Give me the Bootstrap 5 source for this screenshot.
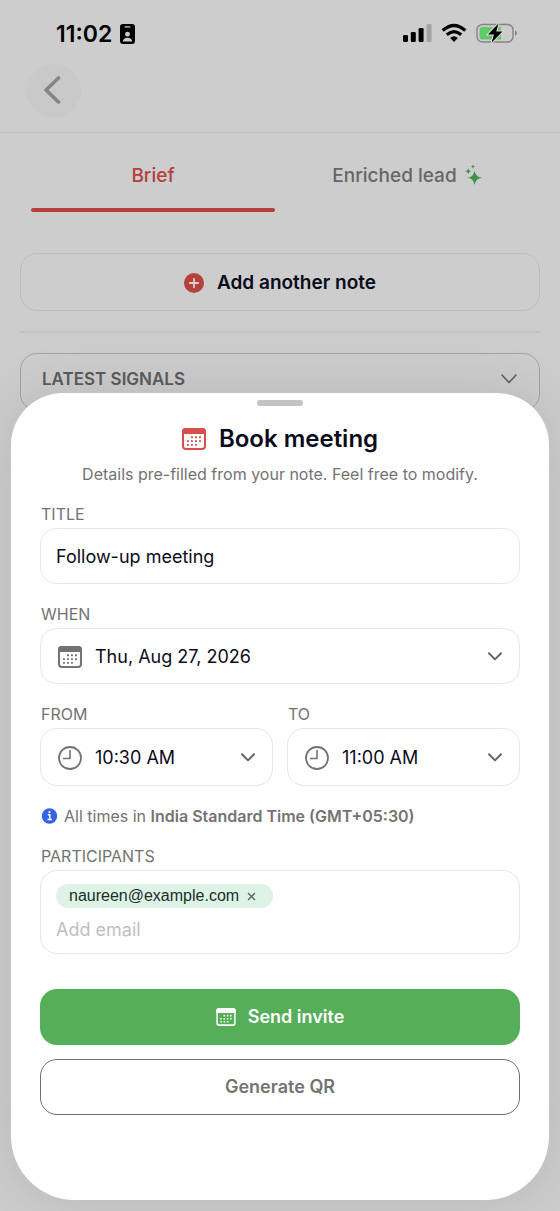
<!DOCTYPE html>
<html lang="en">
<head>
<meta charset="utf-8">
<meta name="viewport" content="width=device-width, initial-scale=1">
<title>Book meeting</title>
<link href="https://cdn.jsdelivr.net/npm/bootstrap@5.3.0/dist/css/bootstrap.min.css" rel="stylesheet">
<style>
  body { background: #cdcdcd; color: #0b0b1c; font-family: Inter, "Liberation Sans", sans-serif; font-size: 18px; line-height: 24px; padding-bottom: 11px; }
  svg { flex: none; display: block; }

  /* Dimmed page */
  .status-bar { padding: 18px 42px 0 56px; height: 64px; color: #000; align-items: flex-start; }
  .clock-text { font-size: 23px; line-height: 32px; font-weight: 600; }
  .status-icons { height: 30px; }
  .app-header { padding: 0 27px 14px; border-bottom: 1px solid #c3c3c3; }
  .back-btn { width: 54px; height: 54px; background: #c9c9c9; border: 0; color: #858585; padding: 0 4px 2px 0; }
  .tab-row { padding: 24px 31px 0; gap: 10px; }
  .tab-link { height: 55px; padding-top: 7px; color: #666; font-weight: 500; font-size: 19px; border-bottom: 4px solid transparent; text-decoration: none; position: relative; }
  .tab-link.active { color: #b5403c; }
  .tab-link.active::after { content: ""; position: absolute; left: 0; right: 0; bottom: -4px; height: 4px; border-radius: 2px; background: #b5403c; }
  .page-body { padding: 41px 20px 0; }
  .note-btn { height: 58px; border: 1px solid #bcbebe; border-radius: 17px; background: none; font-size: 19px; font-weight: 600; color: #0b0b1c; padding-top: 2px; }
  .rule { height: 2px; background: #c3c3c3; margin: 20px 0; }
  .signals-btn { height: 58px; padding: 0 22px 6px 21px; border: 1px solid #a4a4a4; border-radius: 17px; background: none; color: #5c5c5c; font-size: 17px; font-weight: 600; }

  /* Bottom sheet */
  .sheet { margin: -18px 11px 0; padding: 7px 29px 85px; background: #fff; border-radius: 52px 52px 64px 64px; box-shadow: 0 0 60px rgba(0,0,0,.11); }
  .grabber { width: 46px; height: 6px; border-radius: 3px; background: #c4c4c4; }
  .sheet-title { font-size: 24px; line-height: 32px; font-weight: 600; margin: 17px 0 7px; gap: 13px; }
  .sheet-sub { color: #737373; font-size: 16px; line-height: 24px; margin-bottom: 18px; }
  .field-label { display: block; color: #737373; font-size: 16px; line-height: 20px; margin-bottom: 4px; padding-left: 1px; }
  .field-group { margin-bottom: 20px; }
  .field-box { height: 56px; border: 1px solid #e5e7e7; border-radius: 17px; background: #fff; color: #0b0b1c; font-size: 18px; padding: 0 15px; }
  .field-box.with-icon { padding: 1px 17px 0; gap: 13px; color: #737373; }
  .field-box.time-box { height: 58px; }
  .plain-select { appearance: none; border: 0; outline: 0; min-width: 0; height: 100%; padding: 1px 20px 0 0; color: #0b0b1c; background: url("data:image/svg+xml,%3Csvg xmlns='http://www.w3.org/2000/svg' width='14' height='9' fill='none' stroke='%23666' stroke-width='2' stroke-linecap='round' stroke-linejoin='round'%3E%3Cpath d='M1 1.2 7 7.4l6-6.2'/%3E%3C/svg%3E") right center no-repeat; }
  .two-up { display: grid; grid-template-columns: 1fr 1fr; gap: 14px; }
  .tz-note { color: #737373; font-size: 16px; line-height: 20px; gap: 6px; padding-left: 1px; }
  .people-box { border: 1px solid #e5e7e7; border-radius: 17px; padding: 13px 15px 11px; margin-bottom: 35px; }
  .person-chip { height: 24px; padding: 0 17px 0 13px; gap: 8px; background: #dff2e6; color: #16302b; font-family: "Liberation Sans", Arial, sans-serif; font-size: 16px; line-height: 24px; margin-bottom: 10px; }
  .chip-x { border: 0; background: none; padding: 0; color: #4c5f5a; }
  .email-input { border: 0; outline: 0; padding: 0; height: 24px; font-size: 18px; color: #0b0b1c; }
  .email-input::placeholder { color: #bfbfbf; opacity: 1; }
  .sheet-btn { height: 56px; border-radius: 17px; font-size: 18px; font-weight: 600; gap: 12px; padding-top: 1px; }
  .send-btn { background: #55ae58; border: 0; color: #fff; margin-bottom: 14px; }
  .qr-btn { background: #fff; border: 1px solid #6f6f6f; color: #737373; }
</style>
</head>
<body>

<svg width="0" height="0" class="position-absolute" aria-hidden="true">
  <symbol id="calendar" viewBox="0 0 24 22">
    <rect x="1" y="1" width="22" height="20" rx="3" fill="none" stroke="currentColor" stroke-width="2"/>
    <path d="M0 6V3.600Q0 0 3.600 0h16.800Q24 0 24 3.600V6z" fill="currentColor"/>
    <path d="M9 9.300h11M5 13.100h15M5 16.900h11" fill="none" stroke="currentColor" stroke-width="1.900" stroke-dasharray="1.900 2.100"/>
  </symbol>
  <symbol id="clock" viewBox="0 0 24 24">
    <circle cx="12" cy="12" r="11" fill="none" stroke="currentColor" stroke-width="1.800"/>
    <path d="M12 4.500V12.500H5.500" fill="none" stroke="currentColor" stroke-width="1.600" stroke-linejoin="round" stroke-linecap="round"/>
  </symbol>
</svg>

<header>
  <div class="status-bar d-flex justify-content-between">
    <div class="d-flex align-items-center gap-2">
      <span class="clock-text">11:02</span>
      <svg width="15" height="20" viewBox="0 0 15 20" aria-hidden="true">
        <rect width="15" height="20" rx="3" fill="#000"/>
        <rect x="4.500" y="2.300" width="6" height="1.300" rx=".6" fill="#cdcdcd"/>
        <circle cx="7.500" cy="10.200" r="2.400" fill="#cdcdcd"/>
        <path d="M2.800 17.600c.2-2.500 2-3.900 4.700-3.900s4.500 1.400 4.700 3.900z" fill="#cdcdcd"/>
      </svg>
    </div>
    <div class="status-icons d-flex align-items-center">
      <svg width="29" height="18" viewBox="0 0 29 18" aria-hidden="true">
        <rect y="11" width="5" height="7" rx="1.300"/><rect x="7.800" y="8" width="5" height="10" rx="1.300"/>
        <rect x="15.600" y="4" width="5" height="14" rx="1.300"/><rect x="23.600" width="5" height="18" rx="1.300" fill="#a5a5a5"/>
      </svg>
      <svg class="ms-2 me-2" width="28" height="20" viewBox="0 0 28 20" aria-hidden="true">
        <path d="M2.700 7.600Q14-2.600 25.300 7.600" fill="none" stroke="#000" stroke-width="3.400"/>
        <path d="M6.800 11.800q7.200-6.200 14.400 0" fill="none" stroke="#000" stroke-width="3.200"/>
        <path d="M10.200 15q3.800-3.400 7.600 0L14 18.900z"/>
      </svg>
      <svg width="42" height="20" viewBox="0 0 42 20" aria-hidden="true">
        <rect x="1" y="1.500" width="36" height="17.500" rx="5.500" fill="none" stroke="#858585" stroke-width="1.400"/>
        <path d="M39 7.500q2 .8 2 2.600t-2 2.600z" fill="#858585"/>
        <path d="M6.500 4H25v12.500H6.500Q3.500 16.500 3.500 13.500V7Q3.500 4 6.500 4z" fill="#5ecb69"/>
        <path d="M22.500.5 12 11.600h6L15.600 19.800 26.500 8.600h-6.200z" fill="#000" stroke="#dcdcdc" stroke-width="2" paint-order="stroke"/>
      </svg>
    </div>
  </div>
  <div class="app-header">
    <button type="button" class="back-btn rounded-circle d-flex align-items-center justify-content-center" aria-label="Back">
      <svg width="20" height="28" viewBox="0 0 20 28"><path d="M16.500 2 4 14 16.500 26" fill="none" stroke="currentColor" stroke-width="3.600" stroke-linecap="round" stroke-linejoin="round"/></svg>
    </button>
  </div>
</header>

<nav class="tab-row d-flex" aria-label="Lead">
  <a href="#brief" class="tab-link active flex-fill w-50 d-flex justify-content-center" aria-current="page">Brief</a>
  <a href="#enriched" class="tab-link flex-fill w-50 d-flex justify-content-center gap-2">Enriched lead
    <svg width="17" height="22" viewBox="0 0 16 20" fill="#3f9449" aria-hidden="true">
      <path d="M9 6q.8 5.700 7 6.500-6.200.8-7 7-.8-6.200-6.500-7Q8.200 11.700 9 6z"/>
      <path d="M3 3.500q.3 2.700 3 3-2.700.3-3 3-.3-2.700-3-3 2.700-.3 3-3z"/>
      <path d="M7.500 0q.2 1.800 2 2-1.800.2-2 2-.2-1.800-2-2 1.800-.2 2-2z"/>
    </svg>
  </a>
</nav>

<main>
  <div class="page-body">
    <button type="button" class="note-btn w-100 d-flex align-items-center justify-content-center">
      <svg class="me-2" width="25" height="20" viewBox="0 0 25 20" aria-hidden="true"><circle cx="10" cy="10" r="10" fill="#b5403c"/><path d="M10 5.800v8.400M5.800 10h8.400" stroke="#dcd0d0" stroke-width="1.800" stroke-linecap="round"/></svg>
      Add another note
    </button>
    <div class="rule"></div>
    <button type="button" class="signals-btn w-100 d-flex align-items-center justify-content-between">
      LATEST SIGNALS
      <svg width="16" height="10" viewBox="0 0 16 10" aria-hidden="true"><path d="m1 1 7 7.500L15 1" fill="none" stroke="currentColor" stroke-width="1.600" stroke-linecap="round" stroke-linejoin="round"/></svg>
    </button>
  </div>

  <section class="sheet position-relative z-1" role="dialog" aria-labelledby="sheetTitle">
    <div class="grabber mx-auto"></div>
    <h1 id="sheetTitle" class="sheet-title d-flex align-items-center justify-content-center">
      <svg width="24" height="22" color="#d64f4c" aria-hidden="true"><use href="#calendar"/></svg>
      Book meeting
    </h1>
    <p class="sheet-sub text-center">Details pre-filled from your note. Feel free to modify.</p>

    <form>
      <div class="field-group">
        <label class="field-label" for="mTitle">TITLE</label>
        <input id="mTitle" type="text" class="field-box w-100 d-block" value="Follow-up meeting">
      </div>
      <div class="field-group">
        <label class="field-label" for="mDate">WHEN</label>
        <div class="field-box with-icon d-flex align-items-center">
          <svg width="24" height="22" aria-hidden="true"><use href="#calendar"/></svg>
          <select id="mDate" class="plain-select flex-fill"><option>Thu, Aug 27, 2026</option></select>
        </div>
      </div>
      <div class="two-up field-group">
        <div>
          <label class="field-label" for="mFrom">FROM</label>
          <div class="field-box time-box with-icon d-flex align-items-center">
            <svg width="24" height="24" aria-hidden="true"><use href="#clock"/></svg>
            <select id="mFrom" class="plain-select flex-fill"><option>10:30 AM</option></select>
          </div>
        </div>
        <div>
          <label class="field-label" for="mTo">TO</label>
          <div class="field-box time-box with-icon d-flex align-items-center">
            <svg width="24" height="24" aria-hidden="true"><use href="#clock"/></svg>
            <select id="mTo" class="plain-select flex-fill"><option>11:00 AM</option></select>
          </div>
        </div>
      </div>
      <div class="tz-note field-group d-flex align-items-center">
        <svg width="17" height="16" viewBox="0 0 17 16" aria-hidden="true"><circle cx="8.500" cy="8" r="7.700" fill="#3762e0"/><path d="M6.800 6.800h2v4.500M6.500 11.500h4.500" fill="none" stroke="#fff" stroke-width="1.400"/><circle cx="8.500" cy="4.200" r="1.100" fill="#fff"/></svg>
        <span>All times in <b class="fw-semibold">India Standard Time (GMT+05:30)</b></span>
      </div>
      <label class="field-label" for="mPeople">PARTICIPANTS</label>
      <div class="people-box">
        <div class="d-flex">
          <span class="person-chip rounded-pill d-inline-flex align-items-center">naureen@example.com
            <button type="button" class="chip-x" aria-label="Remove naureen@example.com"><svg width="9" height="9" viewBox="0 0 9 9"><path d="m1 1 7 7M8 1 1 8" stroke="currentColor" stroke-width="1.200"/></svg></button>
          </span>
        </div>
        <input id="mPeople" type="email" class="email-input w-100 d-block" placeholder="Add email">
      </div>
      <button type="submit" class="sheet-btn send-btn w-100 d-flex align-items-center justify-content-center">
        <svg width="20" height="18" viewBox="0 0 24 22" aria-hidden="true"><use href="#calendar" width="24" height="22"/></svg>
        Send invite
      </button>
      <button type="button" class="sheet-btn qr-btn w-100 d-flex align-items-center justify-content-center">Generate QR</button>
    </form>
  </section>
</main>

<script src="https://cdn.jsdelivr.net/npm/bootstrap@5.3.0/dist/js/bootstrap.bundle.min.js"></script>
</body>
</html>
